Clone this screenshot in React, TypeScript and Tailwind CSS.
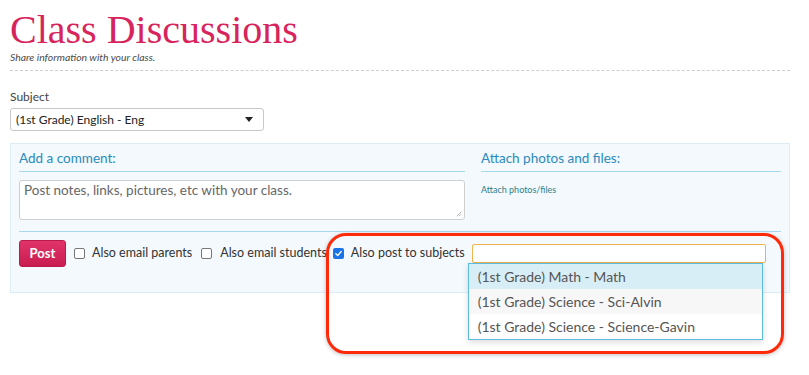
import React from 'react';

const sans = { fontFamily: '"Lato", "Open Sans", sans-serif' };

function Box({ checked }: { checked?: boolean }) {
  if (checked) {
    return (
      <span className="flex h-[11px] w-[11px] items-center justify-center rounded-[2px] bg-[#1a73e8]">
        <svg viewBox="0 0 12 12" className="h-[9px] w-[9px]">
          <path d="M2.5 6.2 L5 8.6 L9.6 3.4" fill="none" stroke="white" strokeWidth="1.8" strokeLinecap="round" strokeLinejoin="round" />
        </svg>
      </span>
    );
  }
  return <span className="block h-[11px] w-[11px] rounded-[2px] border border-[#767676] bg-white" />;
}

export default function App() {
  const options = [
    { label: '(1st Grade) Math - Math', cls: 'bg-[#d8eef7]' },
    { label: '(1st Grade) Science - Sci-Alvin', cls: 'bg-[#f7f7f7]' },
    { label: '(1st Grade) Science - Science-Gavin', cls: 'bg-white' },
  ];

  return (
    <div className="relative h-[375px] w-[809px] overflow-hidden bg-white" style={sans}>
      <div className="px-[10px] pt-[10px]">
        {/* header */}
        <h1
          className="text-[40px] leading-[40px] text-[#d8245c]"
          style={{ fontFamily: '"Liberation Serif", serif' }}
        >
          Class Discussions
        </h1>
        <p className="mt-[1px] text-[10.4px] leading-[12px] italic text-[#4a4a4a]">Share information with your class.</p>
        <div className="mt-[7px] mr-[9px] border-b border-dashed border-[#cfcfcf]" />

        {/* subject */}
        <div className="mt-[18px] text-[12px] leading-[16px] text-[#444]">Subject</div>
        <div className="mt-[3px] flex h-[23px] w-[254px] items-center justify-between rounded-[3px] border border-[#c8c8c8] bg-white pl-[5px] pr-[10px] text-[12px] text-[#222]">
          <span>(1st Grade) English - Eng</span>
          <svg viewBox="0 0 10 6" className="h-[5px] w-[8px]">
            <path d="M0 0 L10 0 L5 6 Z" fill="#222" />
          </svg>
        </div>

        {/* panel */}
        <div className="mt-[12px] mr-[9px] h-[150px] border border-[#dcedf6] bg-[#f3f9fc] px-[8px]">
          <div className="flex gap-[16px]">
            <div className="w-[446px]">
              <div className="border-b border-[#a9d8ee] pt-[5px] pb-[4px] text-[13.5px] leading-[18px] text-[#2b8bbd]">Add a comment:</div>
              <div className="relative mt-[8px] h-[40px] rounded-[3px] border border-[#cfcfcf] bg-white px-[4px] pt-[1px] text-[13.5px] leading-[16px] text-[#666]">
                Post notes, links, pictures, etc with your class.
                <svg viewBox="0 0 8 8" className="absolute right-[2px] bottom-[2px] h-[6px] w-[6px]">
                  <path d="M1 7 L7 1 M4 7 L7 4" stroke="#888" strokeWidth="0.8" />
                </svg>
              </div>
            </div>
            <div className="flex-1">
              <div className="border-b border-[#a9d8ee] pt-[5px] pb-[4px] text-[13.5px] leading-[18px] text-[#2b8bbd]">Attach photos and files:</div>
              <div className="mt-[11px] text-[9px] text-[#2f7f8a]">Attach photos/files</div>
            </div>
          </div>
          <div className="mt-[11px] border-t border-[#a9d8ee] pt-[8px]">
            <div className="flex items-center text-[12.5px] text-[#333]">
              <button className="h-[27px] w-[47px] rounded-[3px] border border-[#b81c4c] bg-gradient-to-b from-[#e0336a] to-[#c91d52] text-[13px] font-bold text-white">
                Post
              </button>
              <span className="ml-[8px]"><Box /></span>
              <span className="ml-[7px]">Also email parents</span>
              <span className="ml-[9px]"><Box /></span>
              <span className="ml-[8px]">Also email students</span>
              <span className="ml-[6px]"><Box checked /></span>
              <span className="ml-[7px]">Also post to subjects</span>
              <div className="relative ml-[7px]">
                <div className="h-[19px] w-[294px] rounded-[2px] border border-[#f0b44c] bg-white" />
                <div className="absolute left-[-4px] top-[19px] w-[295px] border border-[#5bbbe0] bg-white shadow-[0_2px_6px_rgba(0,0,0,0.15)]">
                  {options.map((o) => (
                    <div key={o.label} className={`h-[25px] pl-[9px] text-[14px] leading-[25px] text-[#555] ${o.cls}`}>
                      {o.label}
                    </div>
                  ))}
                </div>
              </div>
            </div>
          </div>
        </div>
      </div>

      {/* annotation outline */}
      <div className="pointer-events-none absolute left-[326px] top-[233px] h-[121px] w-[458px] rounded-[20px] border-[3px] border-[#ff2a0a] shadow-[0_1px_4px_rgba(0,0,0,0.25)]" />
    </div>
  );
}
